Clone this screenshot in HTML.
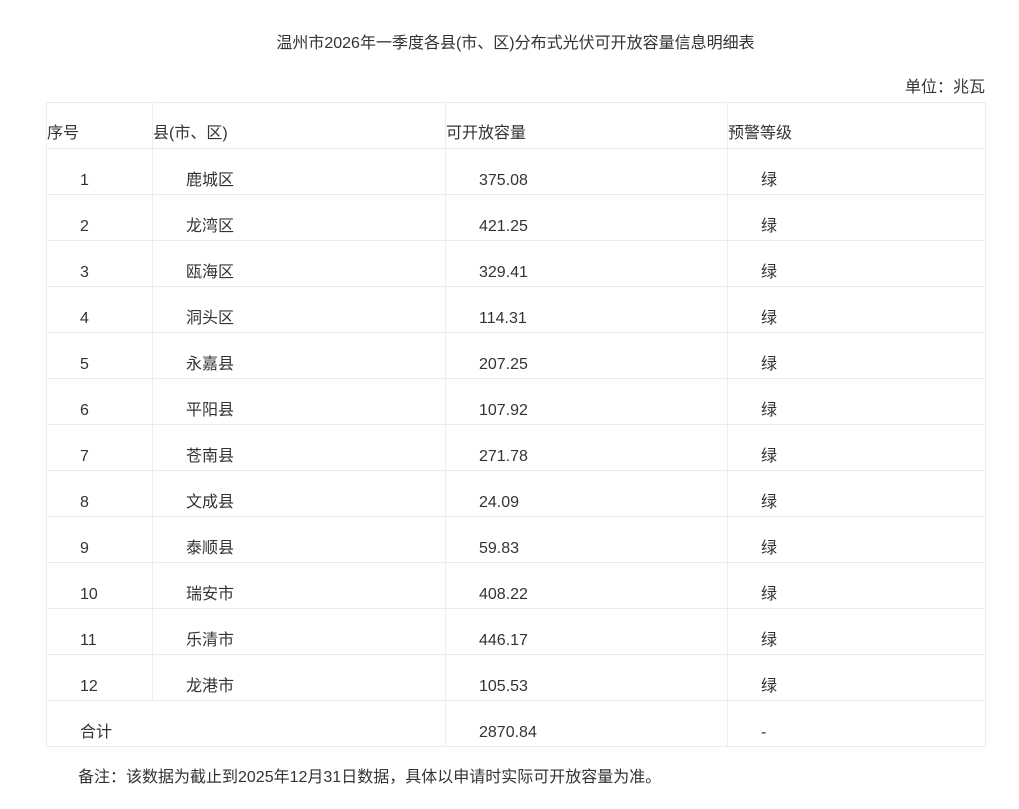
<!DOCTYPE html>
<html><head><meta charset="utf-8"><style>
*{margin:0;padding:0;box-sizing:border-box}
body{width:1019px;height:809px;background:#fff;font-family:"Liberation Sans","Noto Sans CJK SC",sans-serif;font-size:16px;color:#333;position:relative;overflow:hidden}
.t{position:absolute;white-space:nowrap;line-height:20px}
table{position:absolute;left:46px;top:102px;border-collapse:collapse;table-layout:fixed;width:939px}
td{border:1px solid #ececec;height:46px;vertical-align:bottom;padding:0 0 3px 33px;line-height:20px;white-space:nowrap}
tr.h td{padding-left:0;padding-bottom:4px}
</style></head><body>
<div class="t" style="left:0;width:1031px;text-align:center;top:34px">温州市2026年一季度各县(市、区)分布式光伏可开放容量信息明细表</div>
<div class="t" style="right:34px;top:78px">单位：兆瓦</div>
<table>
<colgroup><col style="width:106px"><col style="width:293px"><col style="width:282px"><col style="width:258px"></colgroup>
<tr class="h"><td>序号</td><td>县(市、区)</td><td>可开放容量</td><td>预警等级</td></tr>
<tr><td>1</td><td>鹿城区</td><td>375.08</td><td>绿</td></tr>
<tr><td>2</td><td>龙湾区</td><td>421.25</td><td>绿</td></tr>
<tr><td>3</td><td>瓯海区</td><td>329.41</td><td>绿</td></tr>
<tr><td>4</td><td>洞头区</td><td>114.31</td><td>绿</td></tr>
<tr><td>5</td><td>永嘉县</td><td>207.25</td><td>绿</td></tr>
<tr><td>6</td><td>平阳县</td><td>107.92</td><td>绿</td></tr>
<tr><td>7</td><td>苍南县</td><td>271.78</td><td>绿</td></tr>
<tr><td>8</td><td>文成县</td><td>24.09</td><td>绿</td></tr>
<tr><td>9</td><td>泰顺县</td><td>59.83</td><td>绿</td></tr>
<tr><td>10</td><td>瑞安市</td><td>408.22</td><td>绿</td></tr>
<tr><td>11</td><td>乐清市</td><td>446.17</td><td>绿</td></tr>
<tr><td>12</td><td>龙港市</td><td>105.53</td><td>绿</td></tr>
<tr><td colspan="2">合计</td><td>2870.84</td><td>-</td></tr>
</table>
<div class="t" style="left:78px;top:768px">备注：该数据为截止到2025年12月31日数据，具体以申请时实际可开放容量为准。</div>
</body></html>
